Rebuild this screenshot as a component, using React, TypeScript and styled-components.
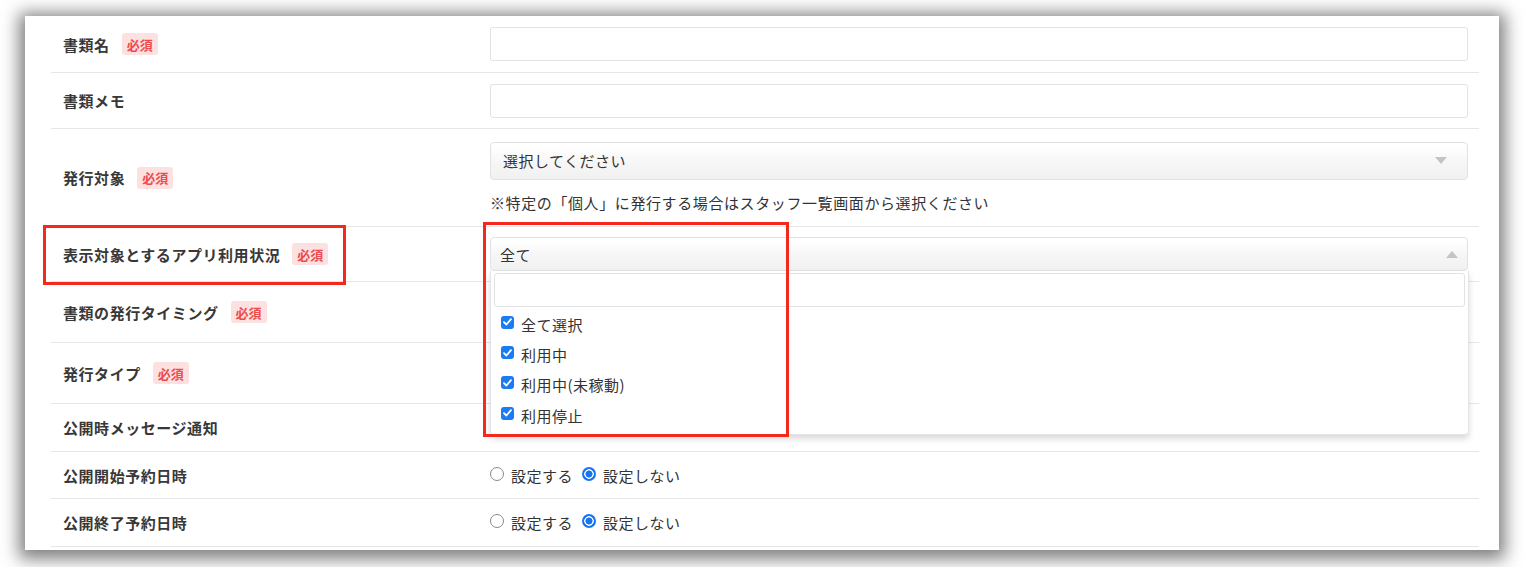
import React from 'react';
import styled, { createGlobalStyle } from 'styled-components';

const GlobalStyle = createGlobalStyle`
  html, body {
    margin: 0;
    padding: 0;
    background: #ffffff;
  }
  body {
    font-family: "Noto Sans CJK JP", "Noto Sans", sans-serif;
    color: #333333;
  }
`;

const Page = styled.div`
  width: 1524px;
  height: 567px;
  box-sizing: border-box;
  padding: 16px 25px 17px 25px;
  overflow: hidden;
`;

const Panel = styled.div`
  height: 534px;
  background: #ffffff;
  box-shadow: 0 3px 16px 6px rgba(0, 0, 0, 0.5);
  padding: 0 20px 0 26px;
  box-sizing: border-box;
`;

const Row = styled.div<{ $h: number }>`
  display: grid;
  grid-template-columns: 439px 1fr;
  align-items: center;
  height: ${(p) => p.$h}px;
  border-bottom: 1px solid #e6e6e6;
  box-sizing: border-box;
`;

const LabelCell = styled.div`
  position: relative;
  display: flex;
  align-items: center;
  gap: 12px;
  padding-left: 12px;
  font-size: 15px;
  letter-spacing: 0.55px;
  font-weight: 700;
  color: #383838;
  height: 100%;
`;

const Required = styled.span`
  display: inline-flex;
  align-items: center;
  height: 22px;
  padding: 0 5px;
  border-radius: 3px;
  background: #fde1e1;
  color: #ec4c4c;
  font-size: 13px;
  letter-spacing: 0;
  font-weight: 700;
`;

const FieldCell = styled.div`
  padding-right: 11px;
  display: flex;
  flex-direction: column;
`;

const TextInput = styled.div`
  height: 34px;
  border: 1px solid #e3e3e3;
  border-radius: 3px;
  background: #ffffff;
  box-sizing: border-box;
`;

const SelectWrap = styled.div`
  position: relative;
`;

const SelectBox = styled.div<{ $h: number }>`
  display: flex;
  align-items: center;
  justify-content: space-between;
  height: ${(p) => p.$h}px;
  padding: 0 20px 0 12px;
  border: 1px solid #e2e2e2;
  border-radius: 4px;
  background: linear-gradient(#ffffff 10%, #f6f6f6 55%, #f1f1f1 100%);
  box-sizing: border-box;
  font-size: 15px;
  letter-spacing: 0.5px;
  color: #333333;
`;

const Caret = styled.span<{ $up?: boolean }>`
  margin-left: auto;
  width: 0;
  height: 0;
  border-left: 6px solid transparent;
  border-right: 6px solid transparent;
  ${(p) =>
    p.$up
      ? 'border-bottom: 7px solid #c4c4c4; margin-right: -11px;'
      : 'border-top: 7px solid #c4c4c4;'}
`;

const Note = styled.div`
  margin-top: 12px;
  font-size: 15px;
  letter-spacing: 0.6px;
  color: #333333;
  line-height: 22px;
`;

const Dropdown = styled.div`
  position: absolute;
  top: 100%;
  left: 0;
  right: -1px;
  z-index: 5;
  background: #ffffff;
  border: 1px solid #e4e4e4;
  border-top: none;
  border-radius: 0 0 4px 4px;
  box-shadow: 0 4px 6px rgba(0, 0, 0, 0.15);
  padding: 2px 3px 3px 3px;
`;

const SearchInput = styled.div`
  height: 34px;
  border: 1px solid #e3e3e3;
  border-radius: 3px;
  box-sizing: border-box;
`;

const CheckList = styled.ul`
  list-style: none;
  margin: 0;
  padding: 2px 0 0 7px;
`;

const CheckItem = styled.li`
  display: flex;
  align-items: center;
  gap: 7px;
  height: 30.4px;
  font-size: 15px;
  letter-spacing: 0.5px;
  color: #333333;
`;

const CheckBox = styled.span`
  display: inline-flex;
  align-items: center;
  justify-content: center;
  width: 13px;
  height: 13px;
  border-radius: 3px;
  background: #1b7bf2;
  margin-top: -4px;
`;

const RadioGroup = styled.div`
  display: flex;
  align-items: center;
  font-size: 15px;
  letter-spacing: 0.5px;
  color: #333333;
`;

const RadioLabel = styled.label`
  display: inline-flex;
  align-items: center;
  gap: 7px;
  margin-right: 9px;
`;

const Radio = styled.span<{ $checked?: boolean }>`
  width: 14px;
  height: 14px;
  border-radius: 50%;
  box-sizing: border-box;
  margin-top: -3px;
  ${(p) =>
    p.$checked
      ? 'background: radial-gradient(circle, #1a74f0 0 3.3px, #ffffff 3.8px 4.5px, #1a74f0 5px);'
      : 'border: 1px solid #8a8a8a; background: #ffffff;'}
`;

const Highlight = styled.div<{ $top: number; $left: number; $w: number; $h: number }>`
  position: absolute;
  top: ${(p) => p.$top}px;
  left: ${(p) => p.$left}px;
  width: ${(p) => p.$w}px;
  height: ${(p) => p.$h}px;
  border: 3px solid #f4291c;
  box-sizing: border-box;
  pointer-events: none;
  z-index: 10;
`;

const Check = () => (
  <svg width="9" height="8" viewBox="0 0 9 8">
    <path d="M1 4.2 L3.4 6.5 L8 1.2" fill="none" stroke="#ffffff" strokeWidth="1.8" strokeLinecap="round" strokeLinejoin="round" />
  </svg>
);

const RadioPair: React.FC<{ yes: string; no: string }> = ({ yes, no }) => (
  <RadioGroup>
    <RadioLabel>
      <Radio />
      {yes}
    </RadioLabel>
    <RadioLabel>
      <Radio $checked />
      {no}
    </RadioLabel>
  </RadioGroup>
);

const statuses = ['全て選択', '利用中', '利用中(未稼動)', '利用停止'];

const App: React.FC = () => {
  return (
    <>
      <GlobalStyle />
      <Page>
        <Panel>
          <Row $h={57}>
            <LabelCell>
              書類名<Required>必須</Required>
            </LabelCell>
            <FieldCell>
              <TextInput />
            </FieldCell>
          </Row>
          <Row $h={56}>
            <LabelCell>書類メモ</LabelCell>
            <FieldCell>
              <TextInput />
            </FieldCell>
          </Row>
          <Row $h={98}>
            <LabelCell>
              発行対象<Required>必須</Required>
            </LabelCell>
            <FieldCell>
              <SelectBox $h={38}>
                選択してください
                <Caret />
              </SelectBox>
              <Note>※特定の「個人」に発行する場合はスタッフ一覧画面から選択ください</Note>
            </FieldCell>
          </Row>
          <Row $h={55}>
            <LabelCell>
              表示対象とするアプリ利用状況<Required>必須</Required>
              <Highlight $top={-2} $left={-8} $w={303} $h={60} />
            </LabelCell>
            <FieldCell>
              <SelectWrap>
                <SelectBox $h={34}>
                  <span style={{ marginLeft: -3 }}>全て</span>
                  <Caret $up />
                </SelectBox>
                <Dropdown>
                  <SearchInput />
                  <CheckList>
                    {statuses.map((s) => (
                      <CheckItem key={s}>
                        <CheckBox>
                          <Check />
                        </CheckBox>
                        {s}
                      </CheckItem>
                    ))}
                  </CheckList>
                </Dropdown>
                <Highlight $top={-15} $left={-7} $w={306} $h={215} />
              </SelectWrap>
            </FieldCell>
          </Row>
          <Row $h={61}>
            <LabelCell>
              書類の発行タイミング<Required>必須</Required>
            </LabelCell>
            <FieldCell>
              <SelectBox $h={37}>
                <Caret />
              </SelectBox>
            </FieldCell>
          </Row>
          <Row $h={61}>
            <LabelCell>
              発行タイプ<Required>必須</Required>
            </LabelCell>
            <FieldCell>
              <SelectBox $h={37}>
                <Caret />
              </SelectBox>
            </FieldCell>
          </Row>
          <Row $h={48}>
            <LabelCell>公開時メッセージ通知</LabelCell>
            <FieldCell>
              <RadioPair yes="通知する" no="通知しない" />
            </FieldCell>
          </Row>
          <Row $h={47}>
            <LabelCell>公開開始予約日時</LabelCell>
            <FieldCell>
              <RadioPair yes="設定する" no="設定しない" />
            </FieldCell>
          </Row>
          <Row $h={48}>
            <LabelCell>公開終了予約日時</LabelCell>
            <FieldCell>
              <RadioPair yes="設定する" no="設定しない" />
            </FieldCell>
          </Row>
        </Panel>
      </Page>
    </>
  );
};

export default App;
